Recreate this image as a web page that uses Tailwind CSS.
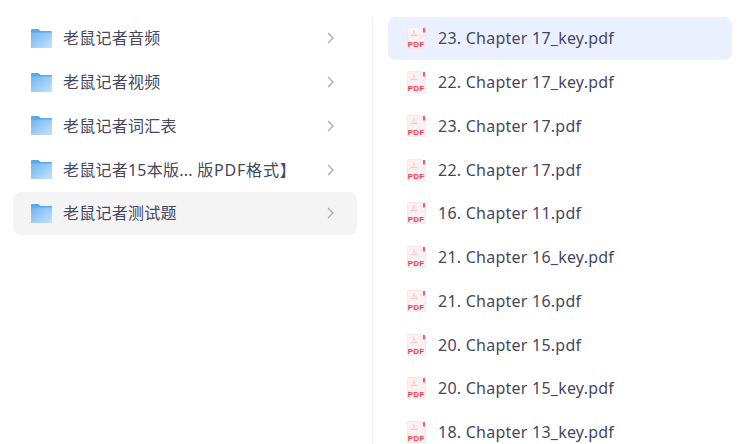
<!DOCTYPE html>
<html><head><meta charset="utf-8"><script src="https://cdn.jsdelivr.net/npm/@tailwindcss/browser@4"></script></head>
<body class="bg-white overflow-hidden">
<svg width="0" height="0" class="absolute">
<defs>
<linearGradient id="fg" x1="0" y1="0" x2="1" y2="1"><stop offset="0" stop-color="#6fb6f1"/><stop offset="1" stop-color="#c6e2fb"/></linearGradient>
<symbol id="folder" viewBox="0 0 21 19"><path d="M0 1a1 1 0 0 1 1-1h6.500l2 2H20a1 1 0 0 1 1 1V18a1 1 0 0 1-1 1H1a1 1 0 0 1-1-1z" fill="#5aa9ec"/><path d="M0 3.500h20a1 1 0 0 1 1 1V18a1 1 0 0 1-1 1H1a1 1 0 0 1-1-1z" fill="url(#fg)"/></symbol>
<symbol id="pdf" viewBox="0 0 19 22"><path d="M1 .5h13l4.500 4v16.500a.5.5 0 0 1-.5.500H1a.5.5 0 0 1-.5-.500V1A.5.5 0 0 1 1 .5z" fill="#fdf0f0" stroke="#f9e6e6" stroke-width="1"/><path d="M17 1v4.500" stroke="#ee2b38" stroke-width="1.500"/><path d="M7 3.500c0 2.500 1.200 4 3 5M7 3.500c0 2.500-1.200 4.500-3 6M4 8.500h6.500" fill="none" stroke="#f6c4c4" stroke-width="0.800"/><text x="9" y="19.500" text-anchor="middle" font-family="Liberation Sans" font-weight="700" font-size="8" fill="#ee3f4a">PDF</text></symbol>
<symbol id="chev" viewBox="0 0 7 12"><path d="M1 1l5 5-5 5" fill="none" stroke="#a3a4ab" stroke-width="1.100"/></symbol>
</defs></svg>
<div class="flex h-[444px] w-[747px] overflow-hidden font-['Noto_Sans','Noto_Sans_CJK_SC',sans-serif] text-[16px] tracking-[0.24px] text-[#45485e]">
  <div class="w-[372px] shrink-0 pl-[13px] pr-[15px] pt-[16.500px] flex flex-col">
    <div class="h-[43.750px] shrink-0 flex items-center rounded-lg pl-[18px] pr-[23px]"><svg class="w-[21px] h-[19px] mr-[11px] shrink-0"><use href="#folder"/></svg><span class="flex-1">老鼠记者音频</span><svg class="w-[7px] h-[12px] shrink-0"><use href="#chev"/></svg></div>
    <div class="h-[43.750px] shrink-0 flex items-center rounded-lg pl-[18px] pr-[23px]"><svg class="w-[21px] h-[19px] mr-[11px] shrink-0"><use href="#folder"/></svg><span class="flex-1">老鼠记者视频</span><svg class="w-[7px] h-[12px] shrink-0"><use href="#chev"/></svg></div>
    <div class="h-[43.750px] shrink-0 flex items-center rounded-lg pl-[18px] pr-[23px]"><svg class="w-[21px] h-[19px] mr-[11px] shrink-0"><use href="#folder"/></svg><span class="flex-1">老鼠记者词汇表</span><svg class="w-[7px] h-[12px] shrink-0"><use href="#chev"/></svg></div>
    <div class="h-[43.750px] shrink-0 flex items-center rounded-lg pl-[18px] pr-[23px]"><svg class="w-[21px] h-[19px] mr-[11px] shrink-0"><use href="#folder"/></svg><span class="flex-1">老鼠记者15本版... <span class="tracking-[0.8px]">版PDF格式】</span></span><svg class="w-[7px] h-[12px] shrink-0"><use href="#chev"/></svg></div>
    <div class="h-[43.750px] shrink-0 flex items-center rounded-lg pl-[18px] pr-[23px] bg-[#f4f4f5]"><svg class="w-[21px] h-[19px] mr-[11px] shrink-0"><use href="#folder"/></svg><span class="flex-1">老鼠记者测试题</span><svg class="w-[7px] h-[12px] shrink-0"><use href="#chev"/></svg></div>
  </div>
  <div class="flex-1 mt-[16.500px] border-l border-[#eeeef0] pl-[15px] pr-[15px] flex flex-col">
    <div class="h-[43.750px] shrink-0 flex items-center rounded-lg pl-[19px] bg-[#eaf0fe]"><svg class="w-[19px] h-[22px] mr-[12px] shrink-0"><use href="#pdf"/></svg><span>23. Chapter 17_key.pdf</span></div>
    <div class="h-[43.750px] shrink-0 flex items-center rounded-lg pl-[19px]"><svg class="w-[19px] h-[22px] mr-[12px] shrink-0"><use href="#pdf"/></svg><span>22. Chapter 17_key.pdf</span></div>
    <div class="h-[43.750px] shrink-0 flex items-center rounded-lg pl-[19px]"><svg class="w-[19px] h-[22px] mr-[12px] shrink-0"><use href="#pdf"/></svg><span>23. Chapter 17.pdf</span></div>
    <div class="h-[43.750px] shrink-0 flex items-center rounded-lg pl-[19px]"><svg class="w-[19px] h-[22px] mr-[12px] shrink-0"><use href="#pdf"/></svg><span>22. Chapter 17.pdf</span></div>
    <div class="h-[43.750px] shrink-0 flex items-center rounded-lg pl-[19px]"><svg class="w-[19px] h-[22px] mr-[12px] shrink-0"><use href="#pdf"/></svg><span>16. Chapter 11.pdf</span></div>
    <div class="h-[43.750px] shrink-0 flex items-center rounded-lg pl-[19px]"><svg class="w-[19px] h-[22px] mr-[12px] shrink-0"><use href="#pdf"/></svg><span>21. Chapter 16_key.pdf</span></div>
    <div class="h-[43.750px] shrink-0 flex items-center rounded-lg pl-[19px]"><svg class="w-[19px] h-[22px] mr-[12px] shrink-0"><use href="#pdf"/></svg><span>21. Chapter 16.pdf</span></div>
    <div class="h-[43.750px] shrink-0 flex items-center rounded-lg pl-[19px]"><svg class="w-[19px] h-[22px] mr-[12px] shrink-0"><use href="#pdf"/></svg><span>20. Chapter 15.pdf</span></div>
    <div class="h-[43.750px] shrink-0 flex items-center rounded-lg pl-[19px]"><svg class="w-[19px] h-[22px] mr-[12px] shrink-0"><use href="#pdf"/></svg><span>20. Chapter 15_key.pdf</span></div>
    <div class="h-[43.750px] shrink-0 flex items-center rounded-lg pl-[19px]"><svg class="w-[19px] h-[22px] mr-[12px] shrink-0"><use href="#pdf"/></svg><span>18. Chapter 13_key.pdf</span></div>
  </div>
</div>
</body></html>
